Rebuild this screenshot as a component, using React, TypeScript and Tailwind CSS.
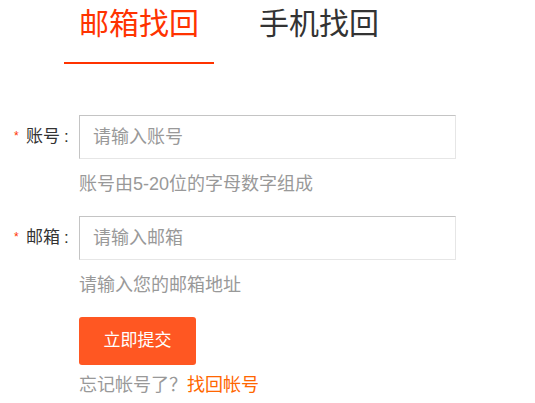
import React from "react";

const font = { fontFamily: '"Liberation Sans", "Noto Sans CJK SC", sans-serif' };

function Row({ label, placeholder, hint }: { label: string; placeholder: string; hint: string }) {
  return (
    <div className="flex flex-col">
      <div className="flex items-center h-[44px]">
        <div className="w-[79px] flex items-center h-full">
          <span className="w-[14px]" />
          <span className="text-[12px] text-[#ff3300] leading-none w-[12px] -mt-[2px]">*</span>
          <span className="text-[17px] text-[#333]">{label}</span>
          <span className="text-[17px] text-[#333] ml-[4px]">:</span>
        </div>
        <input
          className="w-[377px] h-[44px] border border-t-[#c4c4c4] border-l-[#c4c4c4] border-r-[#e6e6e6] border-b-[#e6e6e6] pl-[13px] text-[18px] text-[#333] placeholder:text-[#999] outline-none"
          placeholder={placeholder}
          style={font}
        />
      </div>
      <div className="ml-[79px] mt-[13px] mb-5 h-6 leading-6 text-[18px] text-[#999]">{hint}</div>
    </div>
  );
}

export default function App() {
  return (
    <div className="w-[535px] h-[403px] bg-white overflow-hidden" style={font}>
      <div className="flex pl-[64px] gap-[30px]">
        <div className="w-[150px] h-[64px] border-b-2 border-[#ff3300] text-center text-[30px] leading-[48px] text-[#ff3300]">
          邮箱找回
        </div>
        <div className="w-[150px] h-[64px] text-center text-[30px] leading-[48px] text-[#333]">手机找回</div>
      </div>
      <div className="mt-[51px]">
        <Row label="账号" placeholder="请输入账号" hint="账号由5-20位的字母数字组成" />
        <Row label="邮箱" placeholder="请输入邮箱" hint="请输入您的邮箱地址" />
        <div className="ml-[79px]">
          <button className="w-[117px] h-[48px] bg-[#ff5722] rounded-[3px] text-white text-[17px]">立即提交</button>
          <div className="mt-2 h-6 leading-6 text-[18px] text-[#999] flex">
            <span>忘记帐号了？</span>
            <span className="text-[#ff6600]">找回帐号</span>
          </div>
        </div>
      </div>
    </div>
  );
}
